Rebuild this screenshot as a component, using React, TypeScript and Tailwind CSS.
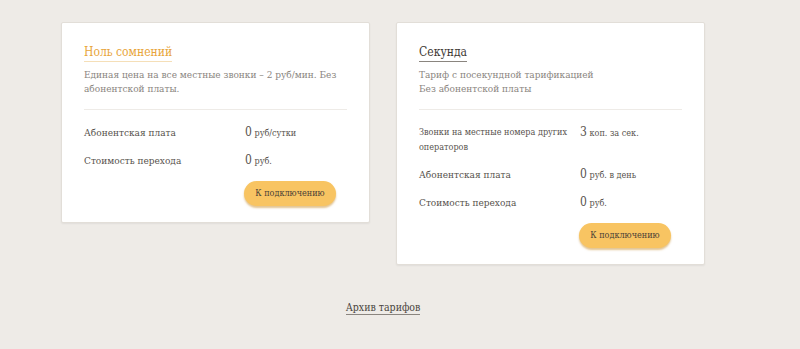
import React from "react";

const font = { fontFamily: '"DejaVu Serif Condensed","Liberation Serif",serif' };

type Row = { label: React.ReactNode; value: React.ReactNode; small?: boolean };

function Card({ title, titleClass, desc, rows }: { title: string; titleClass: string; desc: React.ReactNode; rows: Row[] }) {
  return (
    <div className="w-[309px] bg-white rounded-[2px] border border-[#e2ded8] shadow-[0_1px_2px_rgba(0,0,0,0.06)] pl-[22px] pr-[22px] pt-[16px] pb-[16px]">
      <div className="h-[17px]">
        <span className={`text-[12px] leading-[15px] border-b pb-[1px] inline-block ${titleClass}`}>{title}</span>
      </div>
      <div className="mt-[12px] text-[10px] leading-[14px] text-[#8a8580]">{desc}</div>
      <div className="mt-[13px] h-px bg-[#eeebe7]" />
      <div className="mt-[15px] flex flex-col gap-[12px]">
        {rows.map((r, i) => (
          <div key={i} className="flex">
            <div className={`w-[161px] shrink-0 whitespace-nowrap leading-[15px] text-[#57524d] ${r.small ? "text-[9px]" : "text-[10px]"}`}>{r.label}</div>
            <div className="text-[9px] leading-[15px] text-[#57524d] whitespace-nowrap">{r.value}</div>
          </div>
        ))}
      </div>
      <div className="mt-[10px] pl-[160px]">
        <button className="w-[92px] h-[25px] rounded-full bg-[#f8c462] text-[9px] text-[#4a4036] shadow-[0_2px_2px_rgba(200,140,40,0.5)]" style={font}>
          К подключению
        </button>
      </div>
    </div>
  );
}

const Val = ({ n, s }: { n: string; s: string }) => (
  <span>
    <span className="text-[12px]">{n}</span> {s}
  </span>
);

export default function App() {
  return (
    <div className="w-[800px] h-[349px] bg-[#eeebe7] pt-[22px]" style={font}>
      <div className="flex items-start gap-[26px] pl-[61px]">
        <Card
          title="Ноль сомнений"
          titleClass="text-[#e8a53a] border-[#f5dfb8]"
          desc={<>Единая цена на все местные звонки – 2 руб/мин. Без<br />абонентской платы.</>}
          rows={[
            { label: "Абонентская плата", value: <Val n="0" s="руб/сутки" /> },
            { label: "Стоимость перехода", value: <Val n="0" s="руб." /> },
          ]}
        />
        <Card
          title="Секунда"
          titleClass="text-[#3f3a35] border-[#8a857f]"
          desc={<>Тариф с посекундной тарификацией<br />Без абонентской платы</>}
          rows={[
            { label: <>Звонки на местные номера других<br />операторов</>, value: <Val n="3" s="коп. за сек." />, small: true },
            { label: "Абонентская плата", value: <Val n="0" s="руб. в день" /> },
            { label: "Стоимость перехода", value: <Val n="0" s="руб." /> },
          ]}
        />
      </div>
      <div className="mt-[35px] flex justify-center">
        <a className="text-[10.5px] text-[#4a4540] border-b border-[#8a857f] leading-[14px] ml-[-34px]">Архив тарифов</a>
      </div>
    </div>
  );
}
